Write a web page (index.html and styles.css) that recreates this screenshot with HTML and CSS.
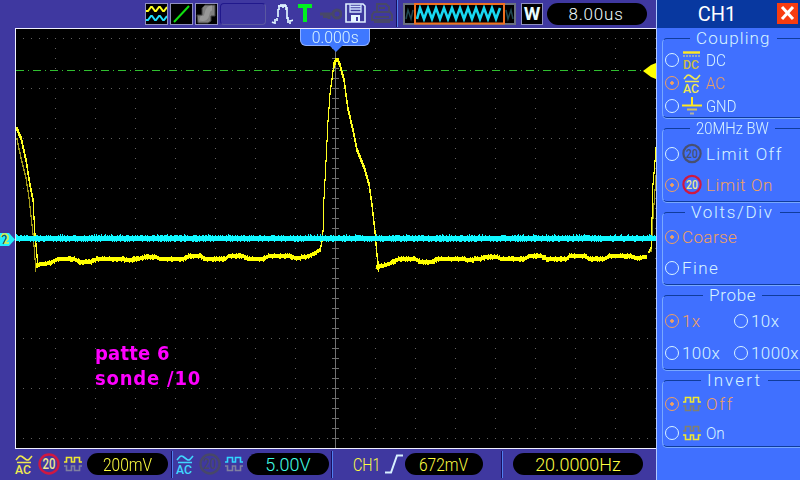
FILE: index.html
```html
<!DOCTYPE html>
<html lang="en">

<head>
    <meta charset="UTF-8">
    <meta name="viewport" content="width=device-width, initial-scale=1.0">
    <title>Oscilloscope</title>
    <link rel="stylesheet" href="styles.css">
</head>

<body>
    <!-- shared symbols -->
    <svg class="defs">
        <symbol id="ac" viewBox="0 0 20 20">
            <path d="M2 6 L5 2.5 Q6.500 1.500 8 2.500 L12 5.500 Q13.500 6.500 15 5.500 L18 2 M3 8.500 H17" fill="none" stroke="currentColor" stroke-width="1.600" />
            <text x="1" y="19.500" font-size="13.500" textLength="16" lengthAdjust="spacingAndGlyphs" fill="currentColor">AC</text>
        </symbol>
        <symbol id="limit" viewBox="0 0 22 22">
            <circle cx="11" cy="11" r="9.500" fill="none" stroke="var(--ring)" stroke-width="2.400" />
            <text x="4.500" y="16" font-size="14" textLength="13" lengthAdjust="spacingAndGlyphs" fill="currentColor">20</text>
        </symbol>
        <symbol id="square" viewBox="0 0 20 18">
            <path d="M1 7 H3.500 V2.500 H8.500 V7 H11.500 V2.500 H16.500 V7 H19" fill="none" stroke="var(--top)" stroke-width="1.600" />
            <path d="M1 11 H3.500 V15.500 H8.500 V11 H11.500 V15.500 H16.500 V11 H19" fill="none" stroke="var(--bottom)" stroke-width="1.600" />
        </symbol>
    </svg>

    <header class="topbar">
        <svg class="box" viewBox="0 0 21 20">
            <path d="M0 7 L2 7 L5 3 H6 L9 7 H10 L13 3 H14 L17 7 H18 L21 3" stroke="#ffff20" />
            <path d="M0 16 L2 16 L5 12 H6 L9 16 H10 L13 12 H14 L17 16 H18 L21 12" stroke="#20e0ff" />
        </svg>
        <svg class="box" viewBox="0 0 21 20">
            <path d="M3 18 L18 2" stroke="#10e010" />
        </svg>
        <svg class="box" viewBox="0 0 21 20">
            <path class="smoke" d="M1 11 H6 V4 L9 1 H19 V12 H15 V17 L12 19 H2 Z" />
            <path class="smoke-light" d="M4 14 Q10 16 11 10 T16 4" />
        </svg>
        <div class="slot"></div>
        <svg class="pulse" width="22" height="22">
            <path d="M1 19 L3 20 M4 16 V21 M6 15 V18 M7 14 V6 M8 7 V2 M10 1 V4 M12 1 V5 M14 1 V4 M15 2 V7 M16 4 V16 M17 14 V20 M19 17 V21 M20 18 L22 17 M7 3 H15" fill="none" stroke="#dff4ff" stroke-width="1.700" />
        </svg>
        <svg class="trig" width="14" height="18">
            <path d="M0 0 H14 V4 H9 V18 H5 V4 H0 Z" fill="#00f020" />
        </svg>
        <svg class="key" width="22" height="14">
            <path d="M0 7 H14 M3 9.500 H8 M9 8 V12" stroke="#484868" stroke-width="3" fill="none" />
            <circle cx="17" cy="7" r="4" fill="none" stroke="#484868" stroke-width="3" />
        </svg>
        <svg class="disk" width="21" height="20">
            <path d="M1 1 H18 L20 3 V19 H1 Z" fill="#3f3a9e" stroke="#dff0ff" stroke-width="1.600" />
            <path d="M5 1 V9 H16 V1 M5 3.500 H16 M5 6 H16" fill="none" stroke="#cfe0ff" stroke-width="1.300" />
            <path d="M6 12 H15 V19 H6 Z" fill="#e8f6ff" />
            <path d="M11 14 H13 V18 H11 Z" fill="#3f3a9e" />
        </svg>
        <svg class="printer" width="22" height="20">
            <path d="M6 9 V1 H15 L18 4 V9 M8 5 H14 M3 9 H19 L21 12 V17 H1 V12 Z M4 14 H18 M3 19 H19" fill="none" stroke="#484868" stroke-width="2" />
        </svg>
        <div class="divider"></div>
        <svg class="overview" width="113" height="22">
            <rect x="1" y="1" width="111" height="20" fill="#000" stroke="#6a7080" stroke-width="2" />
            <path d="M3 16 L5 7 L8 16 L10 7 M103 7 L105 16 L108 7 L110 16" fill="none" stroke="#204850" stroke-width="1.500" />
            <path id="zigzag" fill="none" stroke="#18d8f0" stroke-width="2.600" />
            <rect x="12" y="1" width="89" height="19.500" fill="none" stroke="#f07020" stroke-width="2" />
        </svg>
        <div class="window">W</div>
        <div class="pill timebase">8.00us</div>
    </header>

    <main class="scope">
        <canvas id="screen" width="640" height="419"></canvas>
        <div class="delay"><span>0.000s</span></div>
        <svg class="delay-tip" width="14" height="7">
            <path d="M0 0 H14 L7 7 Z" fill="#3f78ff" />
        </svg>
        <svg class="level" width="13" height="16">
            <path d="M0 8 L8 2 L13 0 V16 L8 14 Z" fill="#ffff00" />
        </svg>
        <svg class="ground" width="15" height="15">
            <path d="M0 1 H9 L15 7.500 L9 14 H0 Z" fill="#20f0ff" />
            <path d="M1 5 L3 2 H6 L8 4 V7 L4 11 H9" fill="none" stroke="#e8f040" stroke-width="1.500" />
            <path d="M2 5 Q3 3 5 3.500 Q7 5 5 8 L3 12" fill="none" stroke="#205860" stroke-width="1.300" />
        </svg>
        <p class="note">patte 6<br><span>sonde /10</span></p>
    </main>

    <aside class="panel">
        <div class="title">
            <h1>CH1</h1>
            <svg class="close" width="21" height="21">
                <rect width="21" height="21" fill="#f83c10" />
                <path d="M5 4 L16 16 M16 4 L5 16" stroke="#fff" stroke-width="3" />
            </svg>
        </div>

        <fieldset class="coupling">
            <legend>Coupling</legend>
            <label><i></i>
                <svg width="20" height="20">
                    <path d="M1 2.500 H18" stroke="#ffe820" stroke-width="2.400" />
                    <path d="M1 6 H18" stroke="#e0e080" stroke-dasharray="2 1" />
                    <text x="1" y="18.500" font-size="13.500" textLength="16" lengthAdjust="spacingAndGlyphs" fill="#d0c040">DC</text>
                </svg>
                <span class="t-dc">DC</span></label>
            <label class="on"><i></i><svg class="yellow" width="20" height="20"><use href="#ac" /></svg><span class="t-dc">AC</span></label>
            <label><i></i>
                <svg width="20" height="20">
                    <path d="M10 1 V9 M0 9.500 H20" stroke="#ffe820" stroke-width="2" />
                    <path d="M5 13.500 H15" stroke="#d0c060" stroke-width="2" />
                    <path d="M8 17.500 H12" stroke="#b0b0a0" stroke-width="2" />
                </svg>
                <span class="t-gnd">GND</span></label>
        </fieldset>

        <fieldset class="bandwidth">
            <legend><span>20MHz BW</span></legend>
            <label><i></i><svg class="limit-off" width="20" height="21"><use href="#limit" /></svg><span class="t-limit-off">Limit Off</span></label>
            <label class="on"><i></i><svg class="limit-on" width="20" height="21"><use href="#limit" /></svg><span class="t-limit-on">Limit On</span></label>
        </fieldset>

        <fieldset class="volts">
            <legend>Volts/Div</legend>
            <label class="on"><i></i><span class="t-coarse">Coarse</span></label>
            <label><i></i><span class="t-fine">Fine</span></label>
        </fieldset>

        <fieldset class="probe">
            <legend>Probe</legend>
            <label class="on"><i></i><span>1x</span></label>
            <label><i></i><span>10x</span></label>
            <label><i></i><span>100x</span></label>
            <label><i></i><span>1000x</span></label>
        </fieldset>

        <fieldset class="invert">
            <legend>Invert</legend>
            <label class="on"><i></i><svg class="sq-off" width="20" height="18"><use href="#square" /></svg><span class="t-off">Off</span></label>
            <label><i></i><svg class="sq-on" width="20" height="18"><use href="#square" /></svg><span class="t-on">On</span></label>
        </fieldset>
    </aside>

    <footer class="status">
        <svg class="yellow" width="20" height="20"><use href="#ac" /></svg>
        <svg class="limit-on small" width="22" height="22"><use href="#limit" /></svg>
        <svg class="sq-ch1" width="20" height="18"><use href="#square" /></svg>
        <div class="pill ch1"><span>200mV</span></div>
        <div class="divider"></div>
        <svg class="cyan" width="20" height="20"><use href="#ac" /></svg>
        <svg class="limit-dim small" width="22" height="22"><use href="#limit" /></svg>
        <svg class="sq-ch2" width="20" height="18"><use href="#square" /></svg>
        <div class="pill ch2"><span>5.00V</span></div>
        <div class="divider"></div>
        <div class="source"><span>CH1</span></div>
        <svg class="slope" width="18" height="20">
            <path d="M0 18.500 H6 L12 1.500 H18" fill="none" stroke="#d8f0ff" stroke-width="2" />
        </svg>
        <div class="pill trigger"><span>672mV</span></div>
        <div class="divider"></div>
        <div class="pill freq">20.0000Hz</div>
    </footer>

    <script src="scope.js"></script>
</body>

</html>
```
FILE: styles.css
```css
* {
    box-sizing: border-box;
}

body {
    margin: 0;
    width: 800px;
    height: 480px;
    overflow: hidden;
    display: grid;
    grid-template-columns: 656px 144px;
    grid-template-rows: 28px 421px 31px;
    background-color: #3f38a0;
    color: #d8f4ff;
    font-family: Roboto, "Liberation Sans", sans-serif;
    font-size: 17px;
    font-weight: 300;
}

.defs {
    position: absolute;
    width: 0;
    height: 0;
}

svg text {
    font-weight: 500;
}

.topbar {
    display: flex;
    align-items: flex-start;
    padding: 3px 0 0 145px;
}

.topbar > * {
    flex: none;
}

.box {
    width: 23px;
    height: 22px;
    margin-right: 2px;
    border: 1px solid #9090c0;
    background: #000;
    fill: none;
    stroke-width: 2;
}

.box .smoke {
    fill: #808080;
    stroke: #404040;
    stroke-width: 1;
}

.box .smoke-light {
    stroke: #989898;
    stroke-width: 5;
}

.slot {
    width: 46px;
    height: 22px;
    border: 1px solid #20188c;
    border-right-color: #5a58a0;
    border-bottom-color: #5a58a0;
    border-radius: 4px;
}

.pulse {
    margin-left: 5px;
}

.trig {
    margin: 1px 0 0 5px;
}

.key {
    margin: 4px 0 0 8px;
}

.disk {
    margin-left: 3px;
}

.printer {
    margin-left: 5px;
}

.divider {
    width: 2px;
    height: 27px;
    background: linear-gradient(90deg, #181060 50%, #5080f0 50%);
}

.topbar .divider {
    margin: -3px 0 0 3px;
}

.overview {
    margin-left: 5px;
}

.window {
    width: 22px;
    height: 22px;
    margin-left: 5px;
    border: 1px solid #9090c0;
    background: #000;
    color: #e8fcff;
    font: bold 19px/20px Roboto, sans-serif;
    text-align: center;
}

.pill {
    height: 22px;
    border-radius: 11px;
    background: #000;
    color: #ffff40;
    line-height: 23px;
    text-align: center;
    font-size: 18px;
}

.pill span,
.delay span,
.source span,
.bandwidth legend span {
    display: inline-block;
}

.timebase {
    width: 100px;
    margin-left: 4px;
    padding-right: 2px;
    color: #f0fcff;
    font-size: 17px;
    letter-spacing: 0.8px;
}

.scope {
    position: relative;
    margin-left: 15px;
    border: 1px solid #f0f0ff;
    border-right: 0;
    background: #000;
}

#screen {
    display: block;
}

.delay {
    position: absolute;
    left: 284px;
    top: 0;
    width: 70px;
    height: 17px;
    border: 1px solid #90b0ff;
    border-top: 0;
    border-radius: 0 0 6px 6px;
    background: #3f78ff;
    text-align: center;
    line-height: 17px;
}

.delay span {
    transform: scaleX(0.93);
}

.delay-tip {
    position: absolute;
    left: 313px;
    top: 16px;
}

.level {
    position: absolute;
    right: 0;
    top: 34px;
}

.ground {
    position: absolute;
    left: -16px;
    top: 203px;
}

.note {
    position: absolute;
    left: 79px;
    top: 312px;
    margin: 0;
    color: #ff00ff;
    font: bold 20px/25px "DejaVu Sans Condensed", "DejaVu Sans", sans-serif;
    letter-spacing: 0.2px;
}

.note span {
    letter-spacing: 0.8px;
}

.panel {
    grid-column: 2;
    grid-row: 1 / 4;
    overflow: hidden;
    border-left: 1px solid #b0c8ff;
    background: #4070ff;
}

.title {
    display: flex;
    height: 28px;
    padding: 3px 2px 0 0;
    background: #0838a0;
}

.title h1 {
    flex: 1;
    margin: 0;
    color: #fff;
    font: 400 20px/22px Roboto, sans-serif;
    text-align: center;
}

fieldset {
    margin: 0 -6px 0 5px;
    padding: 0;
    border: 1px solid #103c9c;
    border-left-color: #78a8ff;
    border-radius: 5px;
    box-shadow: 0 1px 0 #78a8ff;
}

legend {
    height: 20px;
    padding: 0 6px;
    line-height: 20px;
}

label {
    display: flex;
    align-items: center;
    white-space: pre;
}

label i {
    flex: none;
    width: 14px;
    height: 14px;
    margin: 0 3px 0 2px;
    border: 1.5px solid #d8f4ff;
    border-radius: 50%;
}

label svg {
    flex: none;
    margin-right: 4px;
}

label span {
    transform-origin: left;
}

.on {
    color: #f0a060;
}

.on i {
    border-color: #f0a060;
    background: radial-gradient(circle, #f0a060 1.5px, transparent 2px);
}

.coupling {
    height: 90px;
}

.coupling legend {
    margin-left: 27px;
    letter-spacing: 1.1px;
}

.coupling label {
    height: 23px;
}

.t-dc {
    transform: scaleX(0.9);
}

.t-gnd {
    transform: scaleX(0.87);
}

.bandwidth {
    height: 84px;
}

.bandwidth legend {
    width: 85px;
    margin-left: 27px;
    white-space: nowrap;
}

.bandwidth legend span {
    transform: scaleX(0.87);
    transform-origin: left;
}

.bandwidth label {
    height: 31px;
}

.t-limit-off {
    letter-spacing: 1.4px;
}

.t-limit-on {
    letter-spacing: 0.6px;
}

.volts {
    height: 83px;
}

.volts legend {
    margin-left: 22px;
    letter-spacing: 1.7px;
}

.volts label {
    height: 30.5px;
}

.t-coarse {
    letter-spacing: 0.4px;
}

.t-fine {
    letter-spacing: 1.4px;
}

.probe {
    display: grid;
    grid-template-columns: 69px 1fr;
    grid-auto-rows: 32px;
    height: 85px;
}

.probe legend {
    margin-left: 40px;
    letter-spacing: 0.7px;
}

.probe label {
    letter-spacing: 0.4px;
}

.invert {
    height: 77px;
}

.invert legend {
    margin-left: 38px;
    letter-spacing: 2.1px;
}

.invert label {
    height: 28.5px;
}

.t-off {
    letter-spacing: 1.8px;
}

.t-on {
    transform: scaleX(0.9);
}

.yellow {
    color: #f0e850;
}

.cyan {
    color: #40d8ff;
}

.limit-on {
    --ring: #d01840;
    color: #f0e890;
}

.limit-off {
    --ring: #485070;
    color: #485070;
}

.limit-dim {
    --ring: #484868;
    color: #484868;
}

.sq-off {
    --top: #f0e830;
    --bottom: #808070;
}

.sq-on {
    --top: #808070;
    --bottom: #f0e830;
}

.sq-ch1 {
    --top: #f0e830;
    --bottom: #8080a0;
}

.sq-ch2 {
    --top: #30d8ff;
    --bottom: #8080a0;
}

.status {
    display: flex;
    align-items: center;
    padding: 0 0 1px 14px;
}

.status > * {
    flex: none;
}

.status .small {
    margin: 0 3px 0 4px;
}

.ch1 {
    width: 81px;
    margin: 0 3px 0 4px;
}

.ch1 span,
.trigger span {
    transform: scaleX(0.86);
}

.ch2 {
    width: 82px;
    margin: 0 2px 0 3px;
    color: #40ffe8;
}

.status .divider + svg {
    margin-left: 2px;
}

.source {
    width: 27px;
    margin-left: 20px;
    color: #ffff40;
    font-size: 18px;
}

.source span {
    transform: scaleX(0.8);
    transform-origin: left;
}

.slope {
    margin-left: 5px;
}

.trigger {
    width: 78px;
    margin: 0 18px 0 2px;
}

.freq {
    width: 130px;
    margin-left: 10px;
}
```
FILE: scope.js
```js
const canvas = document.getElementById("screen");
const ctx = canvas.getContext("2d");

// all coordinates are in display pixels, the canvas starts at 16,29
ctx.translate(-16, -29);

let seed = 7;
function random() {
    seed = (seed * 16807) % 2147483647;
    return seed / 2147483647;
}

function dot(x, y, w, h, color) {
    ctx.fillStyle = color;
    ctx.fillRect(x, y, w, h);
}

// graticule
for (let y = 38; y < 448; y += 50) {
    for (let x = 23; x < 656; x += 8) dot(x, y, 1, 1, "#606060");
}
for (let x = 55; x < 656; x += 40) {
    for (let y = 38; y < 448; y += 10) dot(x, y, 1, 1, "#606060");
}
dot(335, 29, 1, 419, "#707070");
for (let y = 38; y < 448; y += 10) dot(332, y, 7, 1, "#707070");

// trigger level
for (let x = 16; x < 643; x += 17) {
    dot(x, 70, 8, 1, "#30c030");
    dot(x + 12, 70, 1, 1, "#30c030");
}

// interpolates a list of [x, y] points into one y per column
function sample(points) {
    let out = new Map();
    for (let i = 0; i < points.length - 1; i++) {
        let [x0, y0] = points[i], [x1, y1] = points[i + 1];
        for (let x = Math.ceil(x0); x <= x1; x++) {
            out.set(x, y0 + (y1 - y0) * (x - x0) / (x1 - x0));
        }
    }
    return out;
}

function edge(points, color, extra = 2) {
    let ys = sample(points);
    let last = null;
    for (let [x, y] of ys) {
        let from = last === null ? y : last;
        let top = Math.round(Math.min(from, y));
        let bottom = Math.round(Math.max(from, y));
        dot(x, top, 1, bottom - top + extra, color);
        last = y;
    }
}

function band(points, color) {
    for (let [x, y] of sample(points)) {
        let up = random() < 0.3 ? 1 : 0, down = random() < 0.25 ? 1 : 0;
        dot(x, Math.round(y) - 2 - up, 1, 4 + up + down, color);
    }
}

const ripple = [[50, 263], [57, 259], [73, 259], [80, 262], [90, 262], [97, 259], [120, 259], [127, 260],
    [137, 259], [145, 257], [155, 257], [160, 259], [183, 259], [188, 256], [200, 256], [205, 259],
    [225, 259], [228, 256], [243, 256], [248, 259], [262, 259], [268, 256], [288, 256], [295, 258],
    [305, 257], [313, 254], [319, 250]];

// channel 1
edge([[16, 138], [20, 157], [25, 177], [28, 197], [32, 233], [35, 270]], "#a09818");
edge([[650, 250], [652, 217], [655, 175]], "#a09818");
edge([[16, 127], [20, 136], [25, 158], [29, 183], [32, 198], [34, 233], [37, 264]], "#ffff20", 4);
edge([[319, 250], [321, 240], [322, 230], [323, 197], [325, 160], [327, 120], [329, 93], [332, 70], [335, 59]], "#ffff20");
edge([[337, 58], [339, 63], [343, 78], [347, 107], [352, 128], [356, 148], [363, 165], [368, 182], [371, 203], [374, 230], [376, 253], [378, 268]], "#ffff20", 4);
edge([[648, 251], [650, 247], [651, 217], [652, 183], [654, 160], [655, 147]], "#ffff20");
band([[333, 65], [335, 60], [338, 60], [340, 68]], "#ffff00");
band([[36, 265], [50, 263]], "#ffff00");
band(ripple, "#ffff00");
band([[376, 267], [382, 266], [391, 263]], "#ffff00");
band(ripple.map(([x, y]) => [x + 341, y]).filter(([x]) => x < 650), "#ffff00");

// channel 2
for (let x = 16; x < 656; x++) {
    let r = random();
    let up = r < 0.06 ? 2 : r < 0.4 ? 1 : 0;
    dot(x, 236 - up, 1, 5 + up + (random() < 0.3 ? 1 : 0), "#10f8ff");
}

// record overview
let d = "M14 16";
for (let x = 17, top = true; x < 100; x += 4, top = !top) d += ` L${x} ${top ? 5 : 16}`;
document.getElementById("zigzag").setAttribute("d", d);
```
